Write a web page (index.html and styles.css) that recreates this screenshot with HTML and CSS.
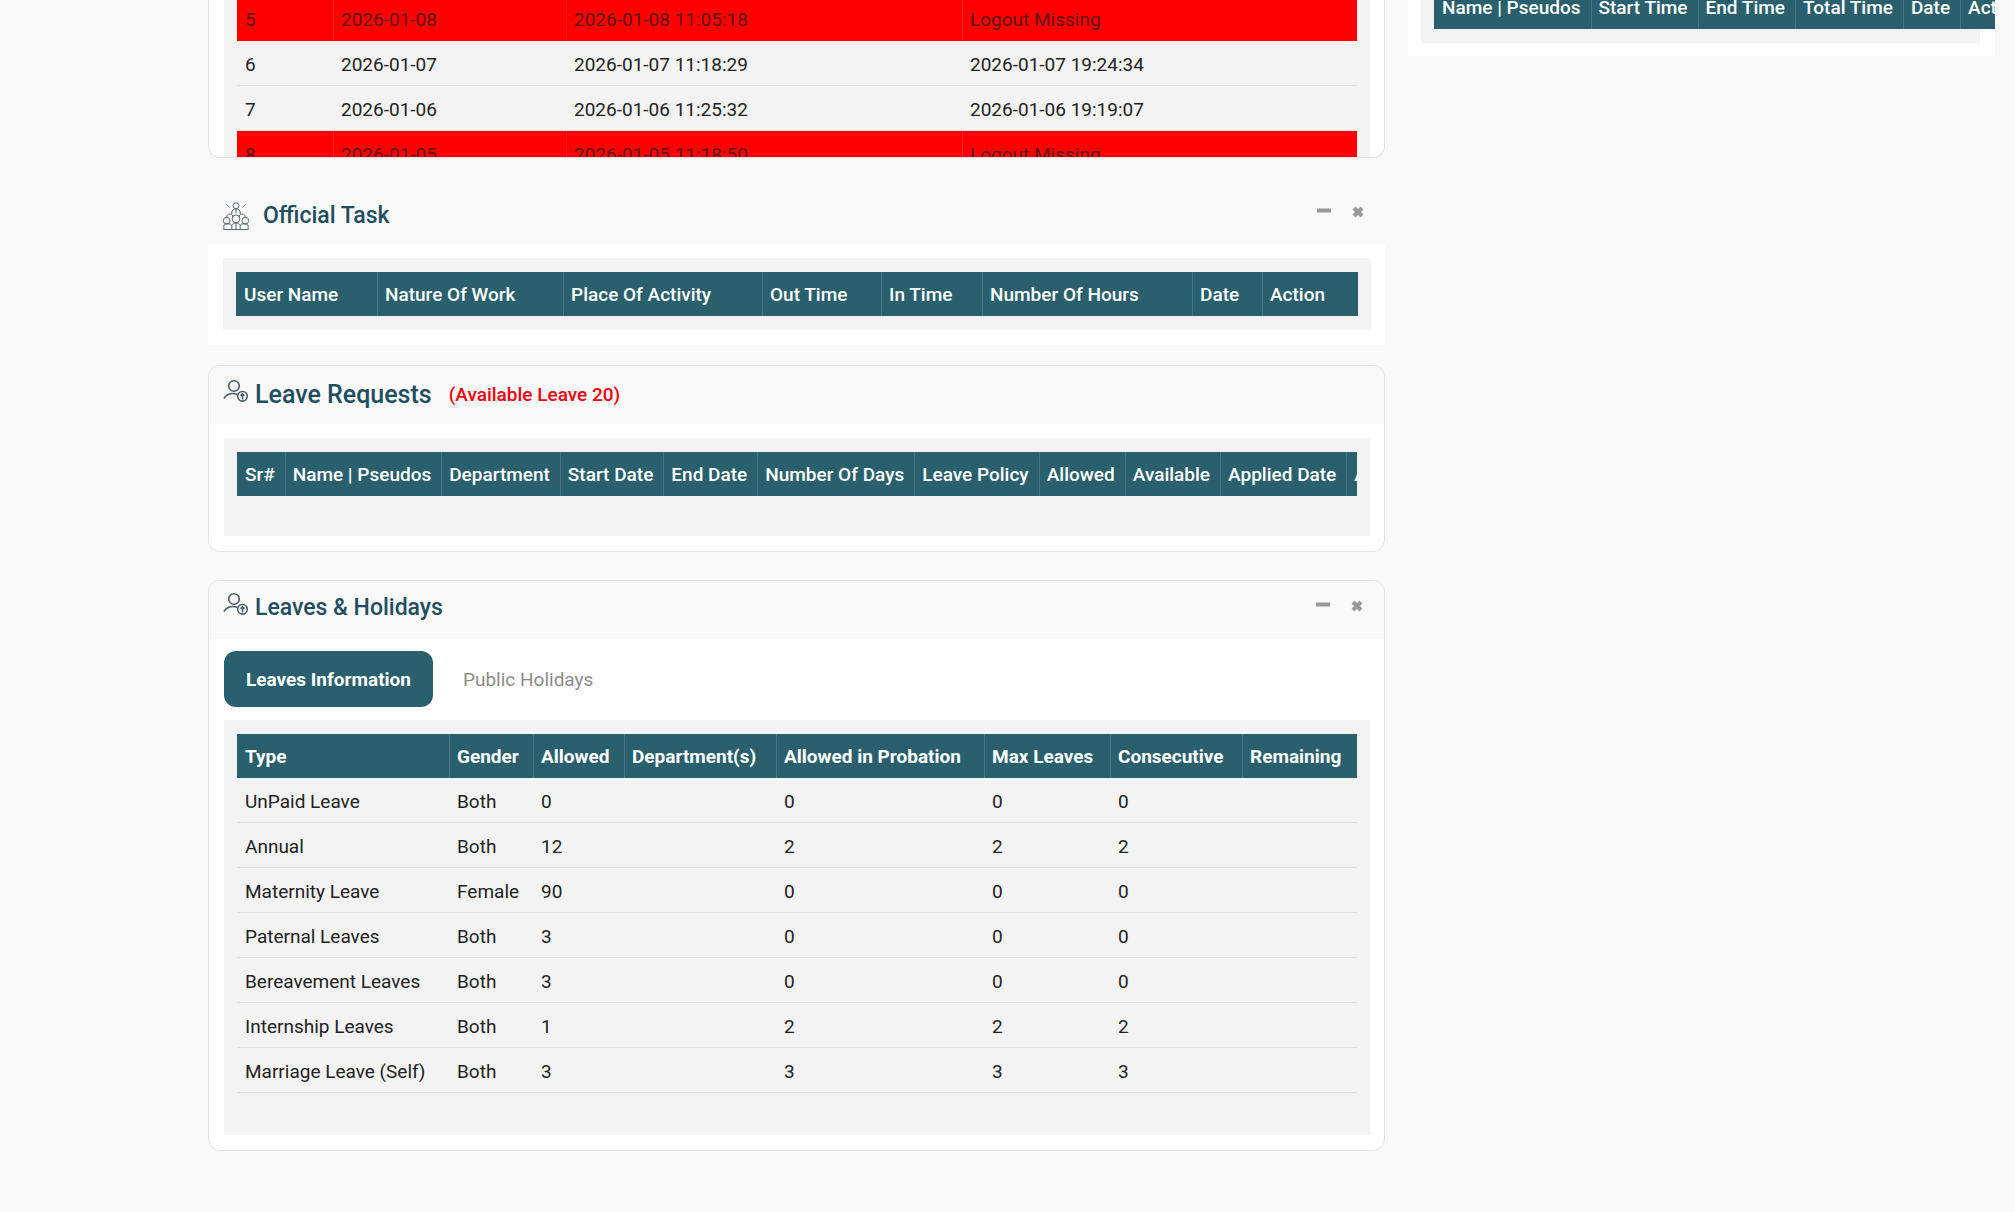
FILE: index.html
```html
<!DOCTYPE html>
<html lang="en">
<head>
<meta charset="utf-8">
<title>Attendance and Leaves</title>
<link rel="stylesheet" href="styles.css">
</head>
<body>
<svg class="sprite" aria-hidden="true">
  <symbol id="icon-person" viewBox="0 0 26 24">
    <circle cx="11" cy="7" r="5.300"/>
    <path d="M1 19.500c2-3.500 5-5 9-5 1.700 0 3 .3 4.300 1"/>
    <circle cx="19.500" cy="17.300" r="4.800"/>
    <path d="M19.500 20.500v-5.500M17.500 16.800l2-2 2 2"/>
  </symbol>
  <symbol id="icon-team" viewBox="0 0 30 32">
    <circle cx="15" cy="5" r="3.200"/>
    <path d="M10.500 14v-1.500c0-2.500 1.500-4 4.500-4s4.500 1.500 4.500 4V14M15 9v4"/>
    <path d="M4 3l4 4M26 3l-4 4" stroke-width="0.700"/>
    <path d="M5 17.500c0-2.500 1.500-3.500 3.500-3.500s3.500 1 3.500 3.500M18 17.500c0-2.500 1.500-3.500 3.500-3.500s3.500 1 3.500 3.500"/>
    <circle cx="15" cy="19" r="4.200"/>
    <circle cx="5" cy="21" r="3.600"/><circle cx="25" cy="21" r="3.600"/>
    <path d="M2 30.500v-4c0-1.200 1-2 2.500-2h3.500c1.500 0 2.500 1 2.500 2.500v3.500M28 30.500v-4c0-1.200-1-2-2.500-2H22c-1.500 0-2.500 1-2.500 2.500v3.500M10.500 26c1-1.800 2-2.300 4.500-2.300s3.500.5 4.500 2.300M15 24v6M1.500 30.500h27"/>
  </symbol>
  <symbol id="icon-minus" viewBox="0 0 14 14"><path d="M0 5.500h14"/></symbol>
  <symbol id="icon-close" viewBox="0 0 14 14"><path d="M3 3l8 8M11 3l-8 8"/></symbol>
</svg>

<main class="page">
  <div class="column">
    <section class="card log">
      <div class="panel">
        <table class="grid log-table">
          <colgroup><col class="w-no"><col class="w-day"><col class="w-in"><col></colgroup>
          <tbody>
            <tr class="missing"><td>5</td><td>2026-01-08</td><td>2026-01-08 11:05:18</td><td>Logout Missing</td></tr>
            <tr><td>6</td><td>2026-01-07</td><td>2026-01-07 11:18:29</td><td>2026-01-07 19:24:34</td></tr>
            <tr><td>7</td><td>2026-01-06</td><td>2026-01-06 11:25:32</td><td>2026-01-06 19:19:07</td></tr>
            <tr class="missing"><td>8</td><td>2026-01-05</td><td>2026-01-05 11:18:50</td><td>Logout Missing</td></tr>
          </tbody>
        </table>
      </div>
    </section>

    <section class="task">
      <header class="card-head">
        <svg class="icon-team"><use href="#icon-team"/></svg>
        <h2>Official Task</h2>
        <div class="tools">
          <button type="button" aria-label="Collapse"><svg><use href="#icon-minus"/></svg></button>
          <button type="button" aria-label="Close"><svg><use href="#icon-close"/></svg></button>
        </div>
      </header>
      <div class="card-body">
        <div class="panel">
          <table class="grid task-table">
            <colgroup><col class="t1"><col class="t2"><col class="t3"><col class="t4"><col class="t5"><col class="t6"><col class="t7"><col></colgroup>
            <thead><tr><th>User Name</th><th>Nature Of Work</th><th>Place Of Activity</th><th>Out Time</th><th>In Time</th><th>Number Of Hours</th><th>Date</th><th>Action</th></tr></thead>
          </table>
        </div>
      </div>
    </section>

    <section class="card requests">
      <header class="card-head">
        <svg class="icon-person"><use href="#icon-person"/></svg>
        <h2 class="large">Leave Requests</h2>
        <span class="available">(Available Leave 20)</span>
      </header>
      <div class="card-body">
        <div class="panel roomy">
          <div class="clip">
            <table class="grid natural">
              <thead><tr><th>Sr#</th><th>Name | Pseudos</th><th>Department</th><th>Start Date</th><th>End Date</th><th>Number Of Days</th><th>Leave Policy</th><th>Allowed</th><th>Available</th><th>Applied Date</th><th>Action</th></tr></thead>
            </table>
          </div>
        </div>
      </div>
    </section>

    <section class="card leaves">
      <header class="card-head">
        <svg class="icon-person"><use href="#icon-person"/></svg>
        <h2>Leaves &amp; Holidays</h2>
        <div class="tools">
          <button type="button" aria-label="Collapse"><svg><use href="#icon-minus"/></svg></button>
          <button type="button" aria-label="Close"><svg><use href="#icon-close"/></svg></button>
        </div>
      </header>
      <div class="card-body">
        <nav class="tabs">
          <button type="button" class="tab active">Leaves Information</button>
          <button type="button" class="tab">Public Holidays</button>
        </nav>
        <div class="panel roomy">
          <table class="grid leaves-table">
            <colgroup><col class="l1"><col class="l2"><col class="l3"><col class="l4"><col class="l5"><col class="l6"><col class="l7"><col></colgroup>
            <thead><tr><th>Type</th><th>Gender</th><th>Allowed</th><th>Department(s)</th><th>Allowed in Probation</th><th>Max Leaves</th><th>Consecutive</th><th>Remaining</th></tr></thead>
            <tbody>
              <tr><td>UnPaid Leave</td><td>Both</td><td>0</td><td></td><td>0</td><td>0</td><td>0</td><td></td></tr>
              <tr><td>Annual</td><td>Both</td><td>12</td><td></td><td>2</td><td>2</td><td>2</td><td></td></tr>
              <tr><td>Maternity Leave</td><td>Female</td><td>90</td><td></td><td>0</td><td>0</td><td>0</td><td></td></tr>
              <tr><td>Paternal Leaves</td><td>Both</td><td>3</td><td></td><td>0</td><td>0</td><td>0</td><td></td></tr>
              <tr><td>Bereavement Leaves</td><td>Both</td><td>3</td><td></td><td>0</td><td>0</td><td>0</td><td></td></tr>
              <tr><td>Internship Leaves</td><td>Both</td><td>1</td><td></td><td>2</td><td>2</td><td>2</td><td></td></tr>
              <tr><td>Marriage Leave (Self)</td><td>Both</td><td>3</td><td></td><td>3</td><td>3</td><td>3</td><td></td></tr>
            </tbody>
          </table>
        </div>
      </div>
    </section>
  </div>

  <aside class="side">
    <div class="panel">
      <table class="grid natural">
        <thead><tr><th>Name | Pseudos</th><th>Start Time</th><th>End Time</th><th>Total Time</th><th>Date</th><th>Action</th></tr></thead>
      </table>
    </div>
  </aside>
</main>
</body>
</html>
```
FILE: styles.css
```css
* {
  box-sizing: border-box;
}

body {
  margin: 0;
  background: #f9f9f9;
  color: #222;
  font: 400 19px/28px Roboto, "Liberation Sans", sans-serif;
}

.sprite {
  display: none;
}

.page {
  display: grid;
  grid-template-columns: minmax(0, 1177fr) minmax(0, 587fr);
  column-gap: 23px;
  align-items: start;
  padding: 0 20px 60px 208px;
  overflow: hidden;
}

.card {
  border: 1px solid #e2e2e2;
  border-radius: 12px;
  background: #fff;
  overflow: hidden;
}

.panel {
  padding: 14px 13px;
  background: #f3f3f3;
}

.panel.roomy {
  padding-bottom: 40px;
}

.grid {
  width: 100%;
  table-layout: fixed;
  border-collapse: separate;
  border-spacing: 0;
}

.grid.natural {
  width: max-content;
  table-layout: auto;
}

.grid th {
  padding: 9px 8px 7px;
  background: #2a5f6e;
  color: #fff;
  font-weight: 500;
  text-align: left;
  white-space: nowrap;
}

.grid.natural th {
  padding-right: 10px;
}

.grid td {
  padding: 10px 8px 6px;
  height: 45px;
  border-bottom: 1px solid #e0e0e0;
  white-space: nowrap;
}

.grid th + th,
.missing td + td {
  box-shadow: inset 1px 0 rgba(255, 255, 255, 0.13);
}

/* attendance log: scrolled list */
.log {
  height: 158px;
  border-top: 0;
  border-radius: 0 0 12px 12px;
  padding: 0 14px 0 15px;
}

.log .panel {
  padding-top: 0;
}

.log-table {
  margin-top: -4px;
}

.grid .missing td {
  border-bottom-color: #f00;
  background: #f00;
  color: #5e1212;
}

.w-no { width: 96px; }
.w-day { width: 233px; }
.w-in { width: 396px; }

/* card headings */
.card-head {
  display: flex;
  align-items: center;
  height: 58px;
  padding: 0 20px 0 14px;
  background: #f9f9f9;
}

h2 {
  margin: 0;
  color: #1f4e5f;
  font-size: 23px;
  font-weight: 500;
  line-height: 32px;
}

h2.large {
  font-size: 25px;
}

.card-head svg {
  flex: none;
  fill: none;
  stroke: #4a5d68;
}

.icon-team {
  width: 28px;
  height: 30px;
  margin-right: 13px;
}

.icon-person {
  width: 26px;
  height: 24px;
  margin: 0 6px 8px 0;
  stroke-width: 1.6;
}

.available {
  margin-left: 17px;
  color: #f0000c;
  font-weight: 500;
}

.tools {
  display: flex;
  gap: 20px;
  margin: 0 0 4px auto;
}

.tools button {
  display: flex;
  padding: 0;
  border: 0;
  background: none;
}

.tools svg {
  width: 14px;
  height: 14px;
  stroke: #999;
  stroke-width: 4;
}

.card-body {
  padding: 14px 14px 15px 15px;
}

.task {
  margin-top: 28px;
  background: #fff;
}

.task .card-head {
  padding-top: 2px;
}

.task .tools {
  margin-bottom: 8px;
}

.t1 { width: 141px; }
.t2 { width: 186px; }
.t3 { width: 199px; }
.t4 { width: 119px; }
.t5 { width: 101px; }
.t6 { width: 210px; }
.t7 { width: 70px; }

.requests {
  margin-top: 20px;
}

.clip {
  overflow: hidden;
}

.leaves {
  margin-top: 28px;
}

.leaves .card-head {
  padding-bottom: 4px;
}

.leaves .card-body {
  padding-top: 12px;
}

.leaves .roomy {
  padding-bottom: 42px;
}

.tabs {
  display: flex;
  gap: 8px;
  margin-bottom: 13px;
}

.tab {
  height: 56px;
  padding: 1px 22px 0;
  border: 0;
  border-radius: 12px;
  background: none;
  color: #8c8c8c;
  font: inherit;
}

.tab.active {
  background: #2a5f6e;
  color: #fff;
  font-weight: 700;
}

.leaves-table th {
  font-weight: 700;
}

.l1 { width: 212px; }
.l2 { width: 84px; }
.l3 { width: 91px; }
.l4 { width: 152px; }
.l5 { width: 208px; }
.l6 { width: 126px; }
.l7 { width: 132px; }

/* right column card */
.side {
  padding: 0 15px 13px 13px;
  background: #fff;
  overflow: hidden;
}

.side .panel {
  padding-top: 0;
}

.side .grid {
  margin-top: -15px;
}
```
